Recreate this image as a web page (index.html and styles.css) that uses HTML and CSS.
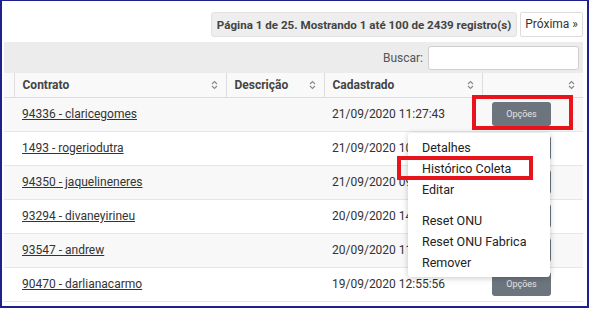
FILE: index.html
```html
<!DOCTYPE html>
<html lang="pt-BR">
<head>
    <meta charset="UTF-8">
    <title>Contratos</title>
    <link rel="stylesheet" href="styles.css">
</head>
<body>
    <div class="frame">
        <div class="pager">
            <span class="pager-info">Página 1 de 25. Mostrando 1 até 100 de 2439 registro(s)</span>
            <a class="pager-next" href="#">Próxima »</a>
        </div>

        <div class="panel">
            <div class="toolbar">
                <label for="search">Buscar:</label>
                <input type="text" id="search">
            </div>

            <table class="grid">
                <colgroup>
                    <col style="width: 10px">
                    <col style="width: 212px">
                    <col style="width: 98px">
                    <col style="width: 158px">
                    <col style="width: 101px">
                </colgroup>
                <thead>
                    <tr>
                        <th class="ctrl"></th>
                        <th>Contrato <svg class="sort" viewBox="0 0 7 10"><path d="M1 4 L3.5 1.5 L6 4 M1 6 L3.5 8.5 L6 6"/></svg></th>
                        <th>Descrição <svg class="sort" viewBox="0 0 7 10"><path d="M1 4 L3.5 1.5 L6 4 M1 6 L3.5 8.5 L6 6"/></svg></th>
                        <th>Cadastrado <svg class="sort" viewBox="0 0 7 10"><path d="M1 4 L3.5 1.5 L6 4 M1 6 L3.5 8.5 L6 6"/></svg></th>
                        <th><svg class="sort" viewBox="0 0 7 10"><path d="M1 4 L3.5 1.5 L6 4 M1 6 L3.5 8.5 L6 6"/></svg></th>
                    </tr>
                </thead>
                <tbody>
                    <tr>
                        <td></td>
                        <td><a href="#">94336 - claricegomes</a></td>
                        <td></td>
                        <td>21/09/2020 11:27:43</td>
                        <td><button class="btn-opt">Opções</button></td>
                    </tr>
                    <tr>
                        <td></td>
                        <td><a href="#">1493 - rogeriodutra</a></td>
                        <td></td>
                        <td>21/09/2020 10:14:02</td>
                        <td><button class="btn-opt">Opções</button></td>
                    </tr>
                    <tr>
                        <td></td>
                        <td><a href="#">94350 - jaquelineneres</a></td>
                        <td></td>
                        <td>21/09/2020 09:41:18</td>
                        <td><button class="btn-opt">Opções</button></td>
                    </tr>
                    <tr>
                        <td></td>
                        <td><a href="#">93294 - divaneyirineu</a></td>
                        <td></td>
                        <td>20/09/2020 14:22:51</td>
                        <td><button class="btn-opt">Opções</button></td>
                    </tr>
                    <tr>
                        <td></td>
                        <td><a href="#">93547 - andrew</a></td>
                        <td></td>
                        <td>20/09/2020 11:05:37</td>
                        <td><button class="btn-opt">Opções</button></td>
                    </tr>
                    <tr>
                        <td></td>
                        <td><a href="#">90470 - darlianacarmo</a></td>
                        <td></td>
                        <td>19/09/2020 12:55:56</td>
                        <td><button class="btn-opt">Opções</button></td>
                    </tr>
                </tbody>
            </table>

            <ul class="menu">
                <li>Detalhes</li>
                <li>Histórico Coleta</li>
                <li>Editar</li>
                <li class="divider"></li>
                <li>Reset ONU</li>
                <li>Reset ONU Fabrica</li>
                <li>Remover</li>
            </ul>

            <div class="mark mark-btn"></div>
            <div class="mark mark-item"></div>
        </div>
    </div>
</body>
</html>
```

FILE: styles.css
```css
* {
    box-sizing: border-box;
}

body {
    margin: 0;
    font-family: Roboto, "Liberation Sans", Arial, sans-serif;
    font-size: 12px;
    color: #333;
    background: #ffffff;
}

.frame {
    width: 589px;
    height: 308px;
    border: 2px solid #1f1f8f;
    border-top-width: 1px;
    background: #ffffff;
    overflow: hidden;
}

.pager {
    display: flex;
    justify-content: flex-end;
    gap: 3px;
    padding: 11px 4px 0 0;
}

.pager-info {
    height: 25px;
    line-height: 25px;
    padding: 0 5px;
    background: #eeeeee;
    border: 1px solid #e2e2e2;
    border-radius: 3px;
    font-size: 11.6px;
    font-weight: bold;
    color: #444;
}

.pager-next {
    height: 25px;
    line-height: 23px;
    padding: 0 4px;
    border: 1px solid #dddddd;
    border-radius: 2px;
    color: #333;
    text-decoration: none;
}

.panel {
    position: relative;
    margin: 5px 4px 0 2px;
}

.toolbar {
    display: flex;
    justify-content: flex-end;
    align-items: center;
    gap: 5px;
    height: 31px;
    padding: 0 4px;
    background: #ececec;
}

.toolbar label {
    color: #555;
}

.toolbar input {
    width: 151px;
    height: 24px;
    border: 1px solid #cfcfcf;
    border-radius: 3px;
    background: #ffffff;
}

.grid {
    width: 100%;
    border-collapse: collapse;
    table-layout: fixed;
}

.grid th {
    position: relative;
    height: 24px;
    padding: 0 8px;
    text-align: left;
    font-weight: bold;
    color: #444;
    background: #f9f9f9;
    border-left: 1px solid #dddddd;
    border-bottom: 1px solid #dddddd;
}

.grid th.ctrl {
    border-left: none;
}

.sort {
    position: absolute;
    right: 8px;
    top: 7px;
    width: 7px;
    height: 10px;
    fill: none;
    stroke: #888;
    stroke-width: 1.1;
}

.grid td {
    height: 34px;
    padding: 0 8px;
    border-bottom: 1px solid #e6e6e6;
    white-space: nowrap;
    overflow: hidden;
}

.grid tbody tr:nth-child(odd) td {
    background: #f8f8f8;
}

.grid td a {
    color: #333;
    text-decoration: underline;
}

.btn-opt {
    margin-left: 2px;
    width: 59px;
    height: 24px;
    border: none;
    border-radius: 3px;
    background: #6c757d;
    color: #e4e4e4;
    font-family: inherit;
    font-size: 9px;
}

.menu {
    position: absolute;
    left: 404px;
    top: 91px;
    width: 142px;
    margin: 0;
    padding: 4px 0;
    list-style: none;
    background: #ffffff;
    border-radius: 3px;
    box-shadow: 0 1px 6px rgba(0, 0, 0, 0.22);
}

.menu li {
    height: 21px;
    line-height: 21px;
    padding: 0 14px;
    font-size: 12.5px;
    color: #222;
}

.menu li.divider {
    height: 10px;
}

.mark {
    position: absolute;
    border: 4px solid #e8141c;
}

.mark-btn {
    left: 468px;
    top: 53px;
    width: 101px;
    height: 35px;
}

.mark-item {
    left: 393px;
    top: 114px;
    width: 136px;
    height: 24px;
}
```
